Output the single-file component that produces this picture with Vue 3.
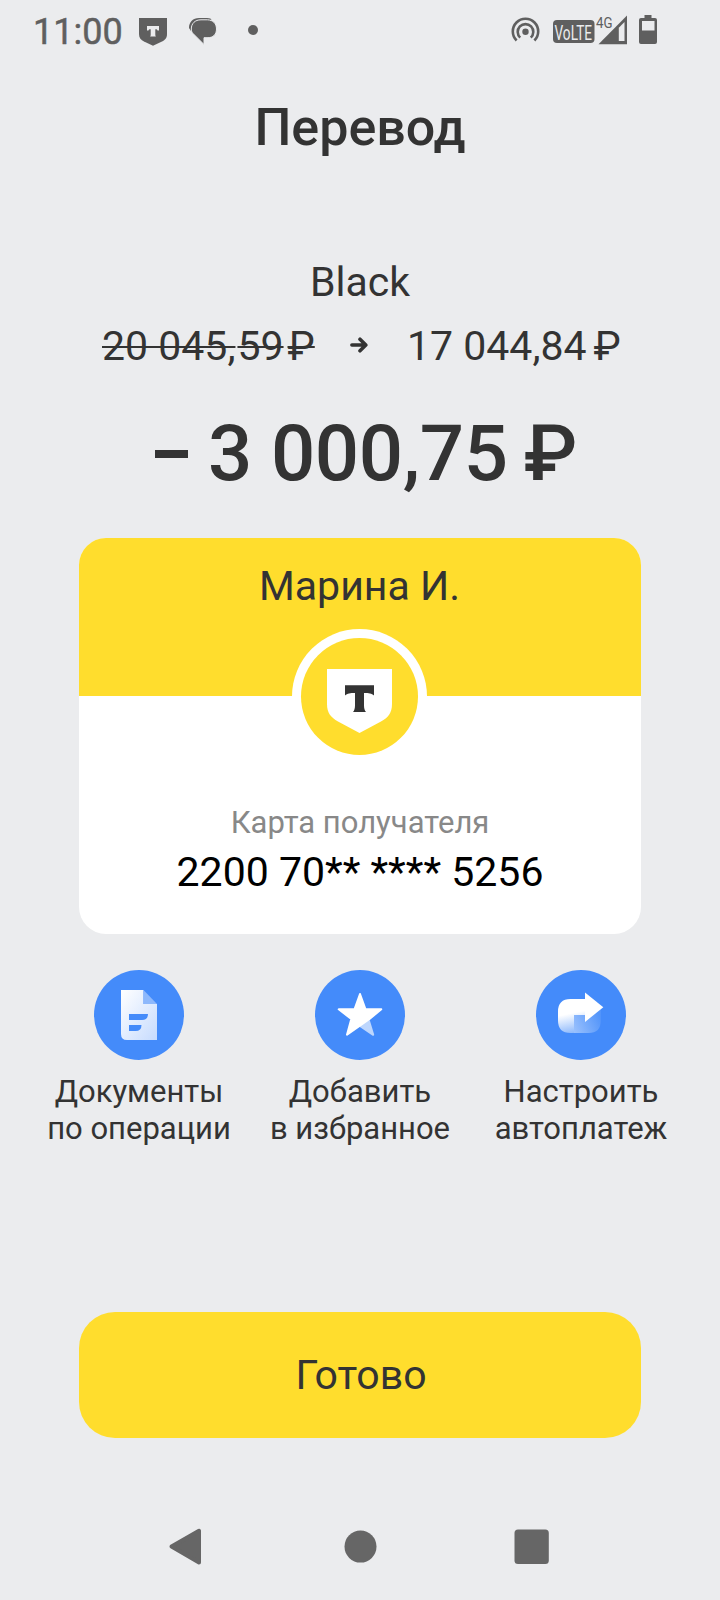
<script setup>
const actions = [
  { icon: 'doc', lines: ['Документы', 'по операции'] },
  { icon: 'star', lines: ['Добавить', 'в избранное'] },
  { icon: 'auto', lines: ['Настроить', 'автоплатеж'] },
]
</script>

<template>
  <div class="screen">
    <header class="status">
      <span class="time">11:00</span>
      <svg class="s-bank" width="28" height="28" viewBox="0 0 28 28">
        <path d="M0 0H28V16C28 20 26 22 23 23.600L14 27.800L5 23.600C2 22 0 20 0 16Z" fill="#5f5f5f" />
        <path d="M8 8H20V12.500H18.500C18.300 11.500 18 11.200 16.300 11.200V16.500C16.300 17.800 16.600 18.200 17 18.500H11C11.500 18.200 11.700 17.800 11.700 16.500V11.200C10 11.200 9.700 11.500 9.500 12.500H8Z" fill="#ebecee" />
      </svg>
      <svg class="s-chat" width="28" height="27" viewBox="0 0 28 27">
        <path d="M0 10C0 4 4 0 10 0H18C21 0 22 .8 22.500 1.500L10 6L2 13Z" fill="#5f5f5f" />
        <path d="M12 1.800H18.500C24 2 27.500 5.500 27.500 11C27.500 16.500 24 19.700 19 19.700H15V26.500L4 15.500C2.800 14.300 2.300 12.500 2.300 11C2.300 5.500 6 1.800 12 1.800Z" fill="#5f5f5f" stroke="#ebecee" stroke-width="1" />
      </svg>
      <i class="s-dot"></i>
      <svg class="s-right" width="150" height="32" viewBox="510 14 150 32">
        <g fill="none" stroke="#5f5f5f" stroke-width="2.600">
          <path d="M516.600 40.500A12.700 12.700 0 1 1 534.400 40.500" />
          <path d="M520.200 37.600A7.800 7.800 0 1 1 530.800 37.600" />
        </g>
        <circle cx="525.500" cy="31.800" r="3.200" fill="#5f5f5f" />
        <rect x="553" y="20" width="41.500" height="23" rx="4" fill="#5f5f5f" />
        <text x="554.500" y="39.600" font-size="21" textLength="37.500" lengthAdjust="spacingAndGlyphs" fill="#ebecee">VoLTE</text>
        <path d="M627 15.500V44.300H598.500Z" fill="#5f5f5f" />
        <path d="M624.500 22V41H618.800V27.800Z" fill="#ebecee" />
        <text x="596" y="27.600" font-size="14.500" textLength="16.500" lengthAdjust="spacingAndGlyphs" fill="#5f5f5f">4G</text>
        <path d="M644.500 15H651.500V18H655Q657 18 657 20V42Q657 44 655 44H641Q639 44 639 42V20Q639 18 641 18H644.500Z" fill="#5f5f5f" />
        <rect x="642" y="21" width="12.500" height="9.500" fill="#ebecee" />
      </svg>
    </header>

    <h1 class="title">Перевод</h1>
    <div class="account">Black</div>
    <div class="balance">
      <span class="old"><span>20 045,</span><span>59</span><span class="rub">₽</span></span>
      <svg class="arrow" width="18" height="16" viewBox="0 0 18 16">
        <path d="M1.900 8H15M10 2.200L15.800 8L10 13.800" fill="none" stroke="#333" stroke-width="3.600" stroke-linecap="round" stroke-linejoin="round" />
      </svg>
      <span class="new"><span>17 044,84</span><span class="rub">₽</span></span>
    </div>
    <div class="amount"><span class="minus"></span><span class="sum">3 000,75</span><span>₽</span></div>

    <section class="card">
      <div class="card-top">Марина И.</div>
      <svg class="logo" width="135" height="135" viewBox="0 0 135 135">
        <circle cx="67.500" cy="67.500" r="67.500" fill="#fff" />
        <circle cx="67.500" cy="67.500" r="58.500" fill="#ffdd2d" />
        <path d="M35 40H100V75C100 84 96 89 89 92.500L67.500 104L46 92.500C39 88.500 35 84 35 75Z" fill="#fff" />
        <path d="M53 56.300H82V66.500C79.500 64.500 77 64 72 64V76C72 79 72.500 81.500 74 83H61C62.500 81.500 63 79 63 76V64C58 64 55.500 64.500 53 66.500Z" fill="#333" />
      </svg>
      <div class="card-label">Карта получателя</div>
      <div class="card-number">2200 70** **** 5256</div>
    </section>

    <nav class="actions">
      <div v-for="a in actions" :key="a.icon" class="action">
        <svg width="90" height="90" viewBox="0 0 90 90">
          <defs>
            <linearGradient id="docFill" x1="0" y1="0" x2="1" y2="1">
              <stop offset="0" stop-color="#fff" />
              <stop offset="1" stop-color="#c6dbfe" />
            </linearGradient>
            <linearGradient id="autoLeft" gradientUnits="userSpaceOnUse" x1="32" y1="44" x2="36" y2="63">
              <stop offset="0" stop-color="#fff" />
              <stop offset="1" stop-color="#8fbafc" />
            </linearGradient>
            <linearGradient id="autoRight" gradientUnits="userSpaceOnUse" x1="36" y1="60" x2="64" y2="48">
              <stop offset="0" stop-color="#9cc2fd" />
              <stop offset="1" stop-color="#5596fa" />
            </linearGradient>
          </defs>
          <circle cx="45" cy="45" r="45" fill="#448bfa" />
          <g v-if="a.icon === 'doc'">
            <path d="M27 20H49.500V34H63V70H33Q27 70 27 64Z" fill="url(#docFill)" />
            <path d="M49.500 20L63 34H49.500Z" fill="#8db8fc" />
            <path d="M35 44H54Q54 50 48 50H35ZM35 55H47.500Q47.500 61 41.500 61H35Z" fill="#448bfa" />
          </g>
          <g v-else-if="a.icon === 'star'" stroke-linejoin="round" stroke-width="2">
            <path d="M45 49L54 51L58.200 64.800L45 56Z" fill="#bdd6fd" stroke="#bdd6fd" />
            <path d="M45 24L50.500 39.300H66.300L54.500 49L32 64.800L36.300 49L23.700 39.300H39.500Z" fill="#fff" stroke="#fff" />
          </g>
          <g v-else>
            <path d="M38 45H49V37H64.800V50.500Q64.800 63 52.500 63H38Z" fill="url(#autoRight)" />
            <path d="M49 29H34.500Q22 29 22 41.500V50.500Q22 63 34.500 63H38V45H49Z" fill="url(#autoLeft)" />
            <path d="M49 22.500L67.300 37.200L49 52Z" fill="#fff" />
          </g>
        </svg>
        <div class="action-text">
          <div v-for="l in a.lines" :key="l">{{ l }}</div>
        </div>
      </div>
    </nav>

    <button class="done">Готово</button>

    <footer class="sysnav">
      <svg width="720" height="72" viewBox="0 1510 720 72">
        <g fill="#666">
          <path d="M171.500 1546.600L199 1530.800V1562.500Z" stroke="#666" stroke-width="4" stroke-linejoin="round" />
          <circle cx="360.500" cy="1546.600" r="16" />
          <rect x="514.500" y="1529.600" width="34.300" height="34.300" rx="3.500" />
        </g>
      </svg>
    </footer>
  </div>
</template>

<style>
body {
  background: #ebecee;
}
</style>

<style scoped>
.screen {
  width: 720px;
  height: 1600px;
  overflow: hidden;
  display: flex;
  flex-direction: column;
  align-items: center;
  background: #ebecee;
  color: #333;
  font-family: Roboto, "Liberation Sans", sans-serif;
  white-space: nowrap;
}
.status {
  width: 720px;
  height: 98px;
  flex: none;
  display: flex;
  align-items: flex-start;
  color: #5f5f5f;
}
.time {
  width: 106px;
  padding-left: 33px;
  box-sizing: border-box;
  margin-top: 12px;
  font-size: 36px;
  -webkit-text-stroke: 0.500px #5f5f5f;
  line-height: 40px;
}
.s-bank {
  margin: 18px 0 0 33px;
}
.s-chat {
  margin: 18px 0 0 22px;
}
.s-dot {
  width: 10px;
  height: 10px;
  border-radius: 50%;
  background: #5f5f5f;
  margin: 25px 0 0 31px;
}
.s-right {
  margin: 14px 0 0 252px;
}
.title {
  margin: 0;
  font-size: 52px;
  font-weight: 500;
  line-height: 60px;
}
.account {
  margin-top: 99px;
  font-size: 41px;
  line-height: 50px;
}
.balance {
  width: 518px;
  margin-top: 14px;
  display: flex;
  font-size: 41px;
  line-height: 50px;
}
.old {
  display: flex;
  flex: none;
  width: 249px;
  gap: 2px;
  padding-left: 1px;
  box-sizing: border-box;
}
.old span {
  text-decoration: line-through;
  text-decoration-thickness: 2px;
}
.old .rub {
  margin-left: 2px;
}
.arrow {
  flex: none;
  margin: 16px 39px 0 0;
}
.new {
  display: flex;
  flex: none;
}
.new .rub {
  margin-left: 7px;
}
.amount {
  width: 420px;
  margin-top: 38px;
  padding-left: 10px;
  box-sizing: border-box;
  display: flex;
  align-items: center;
  font-size: 78px;
  font-weight: 500;
  line-height: 90px;
}
.minus {
  width: 33px;
  height: 8px;
  flex: none;
  margin: 0 20px 0 -5px;
  background: #333;
}
.sum {
  letter-spacing: -0.400px;
}
.amount span:last-child {
  margin-left: 16px;
}
.card {
  width: 562px;
  height: 396px;
  margin-top: 39px;
  border-radius: 27px;
  overflow: hidden;
  background: #fff;
  display: flex;
  flex-direction: column;
  align-items: center;
  flex: none;
}
.card-top {
  width: 562px;
  height: 158px;
  flex: none;
  box-sizing: border-box;
  padding: 23px 1px 0 0;
  background: #ffdd2d;
  text-align: center;
  font-size: 41px;
  line-height: 50px;
}
.logo {
  flex: none;
  position: relative;
  margin-top: -67px;
  margin-right: 1px;
}
.card-label {
  margin-top: 39px;
  color: #888;
  font-size: 31px;
  line-height: 40px;
}
.card-number {
  margin-top: 4px;
  color: #000;
  font-size: 41px;
  line-height: 50px;
}
.actions {
  width: 663px;
  height: 178px;
  margin-top: 36px;
  display: flex;
}
.action {
  width: 221px;
  display: flex;
  flex-direction: column;
  align-items: center;
}
.action-text {
  margin-top: 13px;
  text-align: center;
  font-size: 31px;
  line-height: 37px;
}
.done {
  width: 562px;
  height: 126px;
  flex: none;
  margin: 164px 0 0;
  padding: 0 0 0 2px;
  border: 0;
  border-radius: 36px;
  background: #ffdd2d;
  color: #333;
  font: 41px Roboto, "Liberation Sans", sans-serif;
}
.sysnav {
  margin-top: 72px;
  height: 72px;
}
</style>
